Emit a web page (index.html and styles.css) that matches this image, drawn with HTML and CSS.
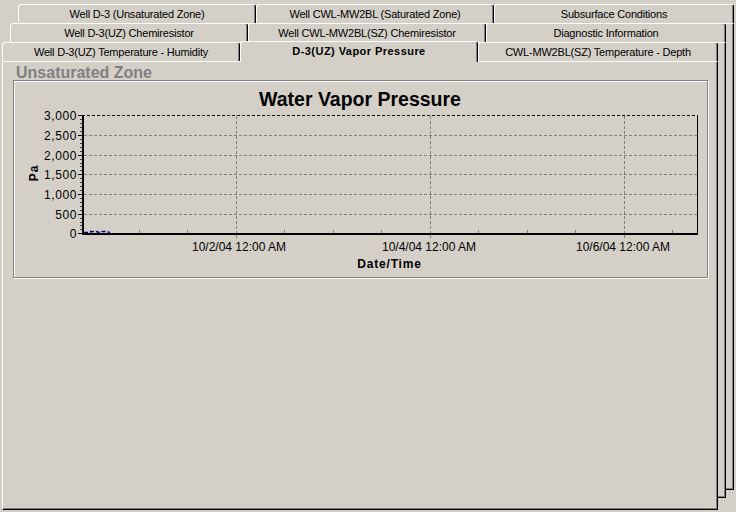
FILE: index.html
```html
<!DOCTYPE html>
<html>
<head>
<meta charset="utf-8">
<link rel="stylesheet" href="styles.css">
</head>
<body>
<div class="tabctl">
  <div class="back back1"></div>
  <div class="back back2"></div>
  <div class="row row1">
    <div class="tab">Well D-3 (Unsaturated Zone)</div>
    <div class="tab">Well CWL-MW2BL (Saturated Zone)</div>
    <div class="tab wide">Subsurface Conditions</div>
  </div>
  <div class="row row2">
    <div class="tab">Well D-3(UZ) Chemiresistor</div>
    <div class="tab">Well CWL-MW2BL(SZ) Chemiresistor</div>
    <div class="tab wide">Diagnostic Information</div>
  </div>
  <div class="row row3">
    <div class="tab">Well D-3(UZ) Temperature - Humidity</div>
    <div class="tab sel">D-3(UZ) Vapor Pressure</div>
    <div class="tab wide">CWL-MW2BL(SZ) Temperature - Depth</div>
  </div>
  <div class="page">
    <div class="caption">Unsaturated Zone</div>
    <div class="panel">
      <svg class="chart" width="693" height="196" viewBox="0 0 693 196">
        <text class="title" x="346" y="25">Water Vapor Pressure</text>
        <g class="grid">
          <line x1="70" y1="54.5" x2="683" y2="54.5"/>
          <line x1="70" y1="74.5" x2="683" y2="74.5"/>
          <line x1="70" y1="93.5" x2="683" y2="93.5"/>
          <line x1="70" y1="113.5" x2="683" y2="113.5"/>
          <line x1="70" y1="133.5" x2="683" y2="133.5"/>
          <line x1="222.5" y1="35" x2="222.5" y2="152"/>
          <line x1="416.5" y1="35" x2="416.5" y2="152"/>
          <line x1="610.5" y1="35" x2="610.5" y2="152"/>
        </g>
        <line class="topline" x1="68" y1="34.5" x2="684" y2="34.5"/>
        <line class="rightline" x1="683.5" y1="34" x2="683.5" y2="154"/>
        <g class="ticks">
          <line x1="222.5" y1="154" x2="222.5" y2="157"/>
          <line x1="416.5" y1="154" x2="416.5" y2="157"/>
          <line x1="610.5" y1="154" x2="610.5" y2="157"/>
          <line x1="76.5" y1="149" x2="76.5" y2="152"/>
          <line x1="125.5" y1="149" x2="125.5" y2="152"/>
          <line x1="173.5" y1="149" x2="173.5" y2="152"/>
          <line x1="270.5" y1="149" x2="270.5" y2="152"/>
          <line x1="319.5" y1="149" x2="319.5" y2="152"/>
          <line x1="367.5" y1="149" x2="367.5" y2="152"/>
          <line x1="464.5" y1="149" x2="464.5" y2="152"/>
          <line x1="513.5" y1="149" x2="513.5" y2="152"/>
          <line x1="561.5" y1="149" x2="561.5" y2="152"/>
          <line x1="658.5" y1="149" x2="658.5" y2="152"/>
          <line class="maj" x1="64" y1="34.5" x2="68" y2="34.5"/>
          <line class="maj" x1="64" y1="54.5" x2="68" y2="54.5"/>
          <line class="maj" x1="64" y1="74.5" x2="68" y2="74.5"/>
          <line class="maj" x1="64" y1="93.5" x2="68" y2="93.5"/>
          <line class="maj" x1="64" y1="113.5" x2="68" y2="113.5"/>
          <line class="maj" x1="64" y1="133.5" x2="68" y2="133.5"/>
          <line class="maj" x1="64" y1="152.5" x2="68" y2="152.5"/>
        </g>
        <path class="minor" d="M66 38.5h2M66 42.5h2M66 46.5h2M66 50.5h2M66 58.5h2M66 62.5h2M66 66.5h2M66 70.5h2M66 78.5h2M66 82.5h2M66 85.5h2M66 89.5h2M66 97.5h2M66 101.5h2M66 105.5h2M66 109.5h2M66 117.5h2M66 121.5h2M66 125.5h2M66 129.5h2M66 137.5h2M66 141.5h2M66 144.5h2M66 148.5h2"/>
        <rect class="axis" x="68" y="34" width="2" height="120"/>
        <rect class="axis" x="68" y="152" width="616" height="2"/>
        <polyline class="data" points="70,151.5 75,151.5 78,150.5 82,150.5 86,151.5 88,150.5 92,150.5 96,151.5"/>
        <g class="ylab">
          <text x="63" y="38.5">3,000</text>
          <text x="63" y="58.5">2,500</text>
          <text x="63" y="78.5">2,000</text>
          <text x="63" y="97.5">1,500</text>
          <text x="63" y="117.5">1,000</text>
          <text x="63" y="137.5">500</text>
          <text x="63" y="156.5">0</text>
        </g>
        <g class="xlab">
          <text x="225" y="170">10/2/04 12:00 AM</text>
          <text x="415" y="170">10/4/04 12:00 AM</text>
          <text x="609" y="170">10/6/04 12:00 AM</text>
        </g>
        <text class="axtitle" x="375.5" y="187">Date/Time</text>
        <text class="axtitle" transform="translate(24,92) rotate(-90)" x="0" y="0">Pa</text>
      </svg>
    </div>
  </div>
</div>
</body>
</html>
```

FILE: styles.css
```css
html, body {
  margin: 0;
  padding: 0;
  background: #d4d0c8;
  overflow: hidden;
}

.tabctl {
  position: relative;
  width: 736px;
  height: 512px;
  padding-top: 4px;
  box-sizing: border-box;
  font-family: "Liberation Sans", Arial, sans-serif;
  color: #000;
}

.back {
  position: absolute;
  z-index: 0;
  box-sizing: border-box;
  border: 1px solid;
  border-color: #fff #000 #000 #fff;
  box-shadow: inset -1px -1px 0 #808080;
  background: #d4d0c8;
}

.back1 {
  left: 18px;
  top: 23px;
  width: 716px;
  height: 467px;
}

.back2 {
  left: 10px;
  top: 42px;
  width: 716px;
  height: 456px;
}

.row {
  position: relative;
  z-index: 1;
  display: flex;
  align-items: flex-start;
  height: 19px;
  width: 716px;
}

.row1 { margin-left: 18px; }
.row2 { margin-left: 10px; }
.row3 { margin-left: 2px; }

.tab {
  flex: 0 0 auto;
  box-sizing: border-box;
  width: 238px;
  height: 19px;
  border: 1px solid;
  border-bottom: 0;
  border-color: #fff #000 transparent #fff;
  border-radius: 3px 3px 0 0;
  box-shadow: inset -1px 0 0 #808080;
  background: #d4d0c8;
  text-align: center;
  font-size: 11px;
  line-height: 18px;
  letter-spacing: -0.2px;
  white-space: nowrap;
  overflow: hidden;
}

.tab.wide { width: 240px; }

.tab.sel {
  position: relative;
  z-index: 2;
  margin-top: -1px;
  height: 21px;
  font-weight: bold;
  letter-spacing: 0.45px;
  line-height: 19px;
}

.page {
  position: relative;
  z-index: 0;
  margin-left: 2px;
  width: 716px;
  height: 449px;
  box-sizing: border-box;
  border: 1px solid;
  border-color: #fff #000 #000 #fff;
  box-shadow: inset -1px -1px 0 #808080;
  background: #d4d0c8;
}

.caption {
  margin: 3px 0 0 13px;
  height: 15px;
  font-size: 16px;
  line-height: 15px;
  font-weight: bold;
  color: #808080;
  white-space: nowrap;
}

.panel {
  margin-left: 10px;
  width: 695px;
  height: 198px;
  box-sizing: border-box;
  border: 1px solid #808080;
  box-shadow: 1px 1px 0 #fff, inset 1px 1px 0 #fff;
}

.chart {
  display: block;
  font-family: "Liberation Sans", Arial, sans-serif;
}

.chart .title {
  font-size: 19.5px;
  font-weight: bold;
  text-anchor: middle;
  fill: #000;
}

.chart .grid line {
  stroke: #808080;
  stroke-width: 1;
  stroke-dasharray: 3 2;
}

.chart .topline {
  stroke: #000;
  stroke-width: 1;
  stroke-dasharray: 3 2;
}

.chart .rightline {
  stroke: #000;
  stroke-width: 1;
}

.chart .ticks line {
  stroke: #808080;
  stroke-width: 1;
}

.chart .ticks line.maj {
  stroke: #000;
}

.chart .minor {
  stroke: #404040;
  stroke-width: 1;
}

.chart .axis {
  fill: #000;
}

.chart .data {
  fill: none;
  stroke: #000080;
  stroke-width: 1.5;
  stroke-dasharray: 4 2;
}

.chart .ylab text {
  font-size: 12px;
  letter-spacing: 0.6px;
  text-anchor: end;
  fill: #000;
}

.chart .xlab text {
  font-size: 12px;
  text-anchor: middle;
  fill: #000;
}

.chart .axtitle {
  font-size: 12px;
  font-weight: bold;
  letter-spacing: 0.8px;
  text-anchor: middle;
  fill: #000;
}
```
